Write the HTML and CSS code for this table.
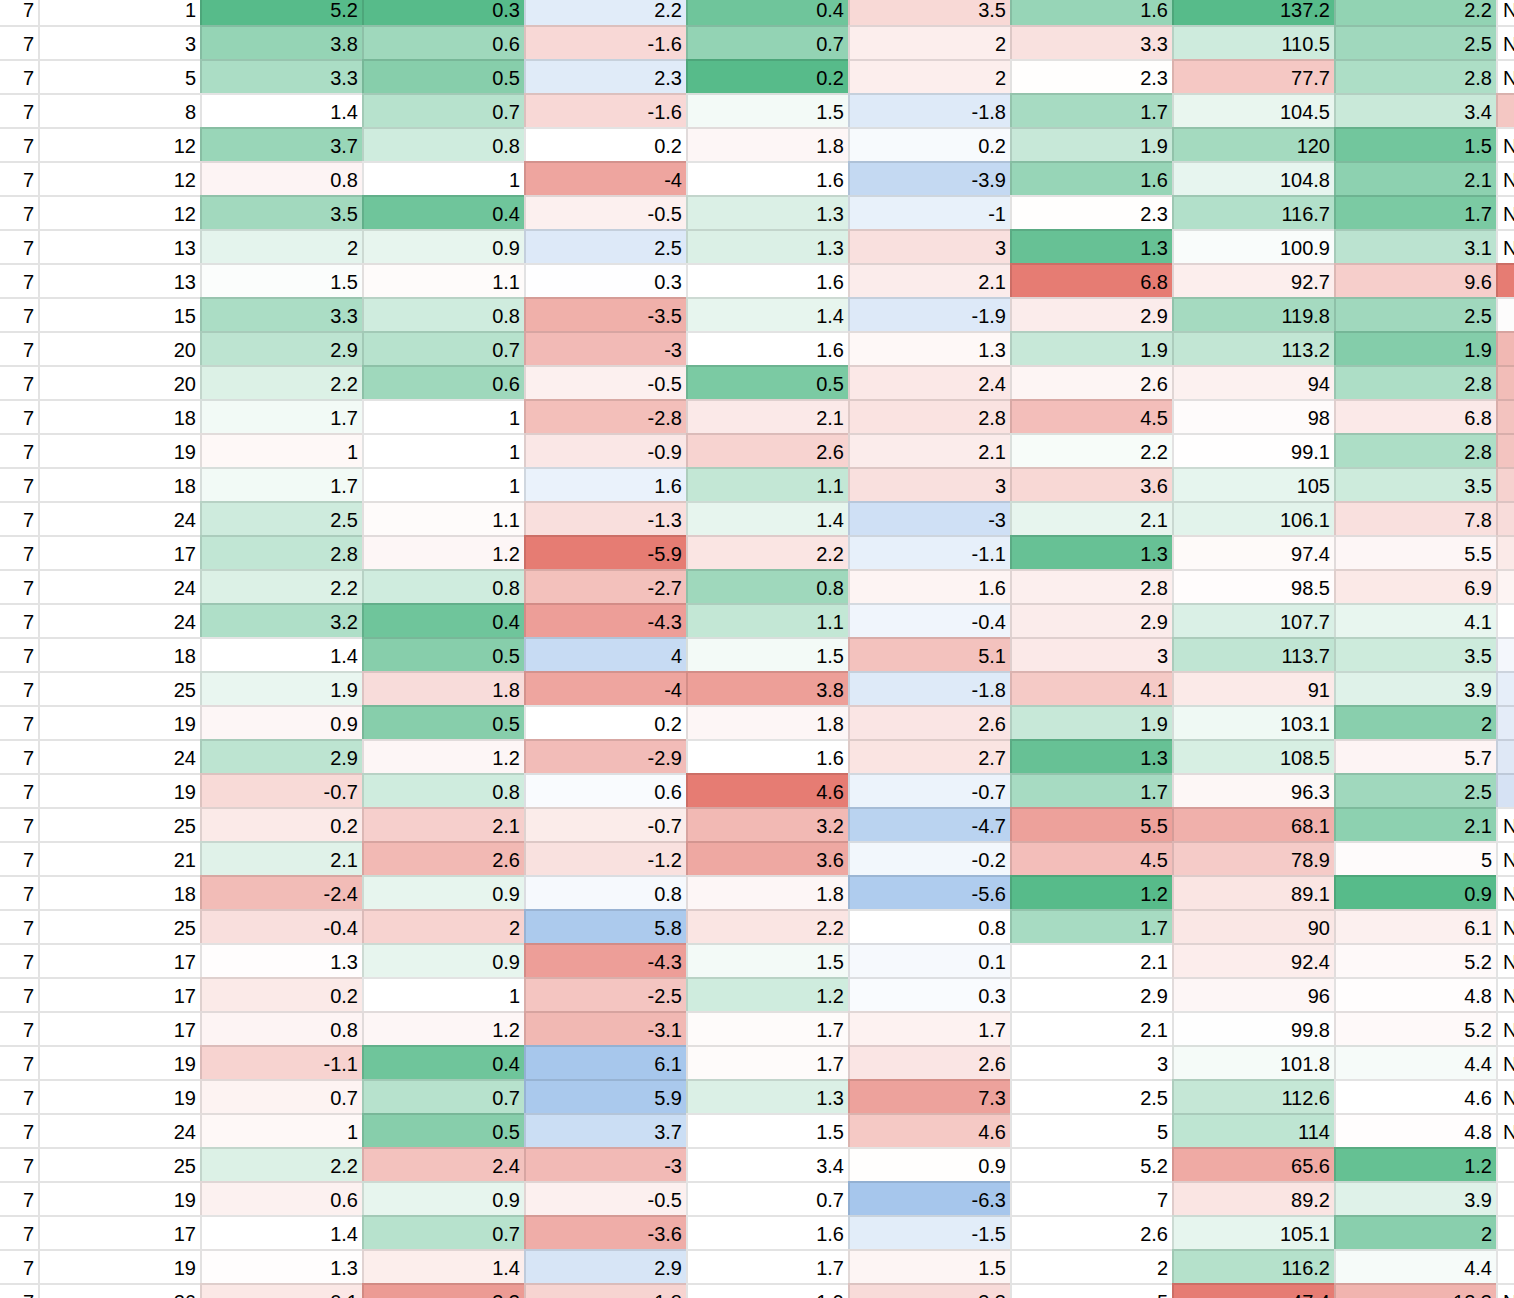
FILE: index.html
```html
<!DOCTYPE html>
<html lang="en">
<head>
<meta charset="utf-8">
<title>Sheet</title>
<link rel="stylesheet" href="styles.css">
</head>
<body>
<div class="sheet" id="sheet"></div>
<script src="script.js"></script>
</body>
</html>
```

FILE: styles.css
```css
html, body {
  margin: 0;
  padding: 0;
  overflow: hidden;
  background: #ffffff;
}
.sheet {
  display: grid;
  grid-template-columns: 38px repeat(9, 162px) 220px;
  grid-auto-rows: 34px;
  margin-top: -9px;
  width: 1716px;
  font-family: "Liberation Sans", Arial, sans-serif;
  font-size: 20px;
  color: #000;
}
.cell {
  box-sizing: border-box;
  border-top: 2px solid rgba(0, 0, 0, 0.11);
  border-left: 2px solid rgba(0, 0, 0, 0.11);
  padding: 3px 4px 0 4px;
  line-height: 29px;
  text-align: right;
  white-space: nowrap;
  overflow: hidden;
  background: #ffffff;
}
.cell.first {
  border-left: none;
}
.cell.text {
  text-align: left;
  padding-left: 5px;
}
```

FILE: script.js
```js
var data = [
  ["7","1","5.2","0.3","2.2","0.4","3.5","1.6","137.2","2.2","N"],
  ["7","3","3.8","0.6","-1.6","0.7","2","3.3","110.5","2.5","N"],
  ["7","5","3.3","0.5","2.3","0.2","2","2.3","77.7","2.8","N"],
  ["7","8","1.4","0.7","-1.6","1.5","-1.8","1.7","104.5","3.4","#f4c7c3"],
  ["7","12","3.7","0.8","0.2","1.8","0.2","1.9","120","1.5","N"],
  ["7","12","0.8","1","-4","1.6","-3.9","1.6","104.8","2.1","N"],
  ["7","12","3.5","0.4","-0.5","1.3","-1","2.3","116.7","1.7","N"],
  ["7","13","2","0.9","2.5","1.3","3","1.3","100.9","3.1","N"],
  ["7","13","1.5","1.1","0.3","1.6","2.1","6.8","92.7","9.6","#e67c73"],
  ["7","15","3.3","0.8","-3.5","1.4","-1.9","2.9","119.8","2.5","#fdfcfc"],
  ["7","20","2.9","0.7","-3","1.6","1.3","1.9","113.2","1.9","#f1b8b3"],
  ["7","20","2.2","0.6","-0.5","0.5","2.4","2.6","94","2.8","#f2bdb8"],
  ["7","18","1.7","1","-2.8","2.1","2.8","4.5","98","6.8","#f3c3bf"],
  ["7","19","1","1","-0.9","2.6","2.1","2.2","99.1","2.8","#f3c4c0"],
  ["7","18","1.7","1","1.6","1.1","3","3.6","105","3.5","#f6d2cf"],
  ["7","24","2.5","1.1","-1.3","1.4","-3","2.1","106.1","7.8","#f8dcda"],
  ["7","17","2.8","1.2","-5.9","2.2","-1.1","1.3","97.4","5.5","#fbeae8"],
  ["7","24","2.2","0.8","-2.7","0.8","1.6","2.8","98.5","6.9","#fdf4f3"],
  ["7","24","3.2","0.4","-4.3","1.1","-0.4","2.9","107.7","4.1","#ffffff"],
  ["7","18","1.4","0.5","4","1.5","5.1","3","113.7","3.5","#f4f7fc"],
  ["7","25","1.9","1.8","-4","3.8","-1.8","4.1","91","3.9","#e6eef9"],
  ["7","19","0.9","0.5","0.2","1.8","2.6","1.9","103.1","2","#e4ecf8"],
  ["7","24","2.9","1.2","-2.9","1.6","2.7","1.3","108.5","5.7","#dfe8f6"],
  ["7","19","-0.7","0.8","0.6","4.6","-0.7","1.7","96.3","2.5","#d6e2f4"],
  ["7","25","0.2","2.1","-0.7","3.2","-4.7","5.5","68.1","2.1","N"],
  ["7","21","2.1","2.6","-1.2","3.6","-0.2","4.5","78.9","5","N"],
  ["7","18","-2.4","0.9","0.8","1.8","-5.6","1.2","89.1","0.9","N"],
  ["7","25","-0.4","2","5.8","2.2","0.8","1.7","90","6.1","N"],
  ["7","17","1.3","0.9","-4.3","1.5","0.1","2.1","92.4","5.2","N"],
  ["7","17","0.2","1","-2.5","1.2","0.3","2.9","96","4.8","N"],
  ["7","17","0.8","1.2","-3.1","1.7","1.7","2.1","99.8","5.2","N"],
  ["7","19","-1.1","0.4","6.1","1.7","2.6","3","101.8","4.4","N"],
  ["7","19","0.7","0.7","5.9","1.3","7.3","2.5","112.6","4.6","N"],
  ["7","24","1","0.5","3.7","1.5","4.6","5","114","4.8","N"],
  ["7","25","2.2","2.4","-3","3.4","0.9","5.2","65.6","1.2",""],
  ["7","19","0.6","0.9","-0.5","0.7","-6.3","7","89.2","3.9",""],
  ["7","17","1.4","0.7","-3.6","1.6","-1.5","2.6","105.1","2",""],
  ["7","19","1.3","1.4","2.9","1.7","1.5","2","116.2","4.4",""],
  ["7","26","0.1","3.3","-1.8","1.9","3.3","5","47.4","12.3","N"]
];

var GREEN = [87, 187, 138];
var RED = [230, 124, 115];
var BLUE = [166, 198, 236];

var scales = {
  2: { lo: -6, loC: RED, mid: 1.4, hi: 5.2, hiC: GREEN, last: 99 },
  3: { lo: 0.3, loC: GREEN, mid: 1.0, hi: 4, hiC: RED, last: 99 },
  4: { lo: -5.9, loC: RED, mid: 0.2, hi: 6.2, hiC: BLUE, last: 99 },
  5: { lo: 0.2, loC: GREEN, mid: 1.6, hi: 4.6, hiC: RED, last: 33 },
  6: { lo: -6.3, loC: BLUE, mid: 0.8, hi: 10, hiC: RED, last: 99 },
  7: { lo: 1.2, loC: GREEN, mid: 2.25, hi: 6.8, hiC: RED, last: 28 },
  8: { lo: 47.4, loC: RED, mid: 99.5, hi: 137.2, hiC: GREEN, last: 99 },
  9: { lo: 0.9, loC: GREEN, mid: 4.6, hi: 18, hiC: RED, last: 99 }
};

function mix(c, t) {
  if (t < 0) t = 0;
  if (t > 1) t = 1;
  var r = Math.round(255 + (c[0] - 255) * t);
  var g = Math.round(255 + (c[1] - 255) * t);
  var b = Math.round(255 + (c[2] - 255) * t);
  return "rgb(" + r + "," + g + "," + b + ")";
}

function colorFor(s, v) {
  if (v <= s.mid) {
    return mix(s.loC, (s.mid - v) / (s.mid - s.lo));
  }
  return mix(s.hiC, (v - s.mid) / (s.hi - s.mid));
}

var sheet = document.getElementById("sheet");
data.forEach(function (row, ri) {
  row.forEach(function (val, ci) {
    var cell = document.createElement("div");
    cell.className = "cell";
    if (ci === 0) cell.className += " first";
    if (ci === 10) {
      cell.className += " text";
      if (val === "N") {
        cell.textContent = "NaN";
      } else if (val) {
        cell.style.background = val;
      }
    } else {
      cell.textContent = val;
      var s = scales[ci];
      if (s && ri + 1 <= s.last) {
        cell.style.background = colorFor(s, parseFloat(val));
      }
    }
    sheet.appendChild(cell);
  });
});
```
